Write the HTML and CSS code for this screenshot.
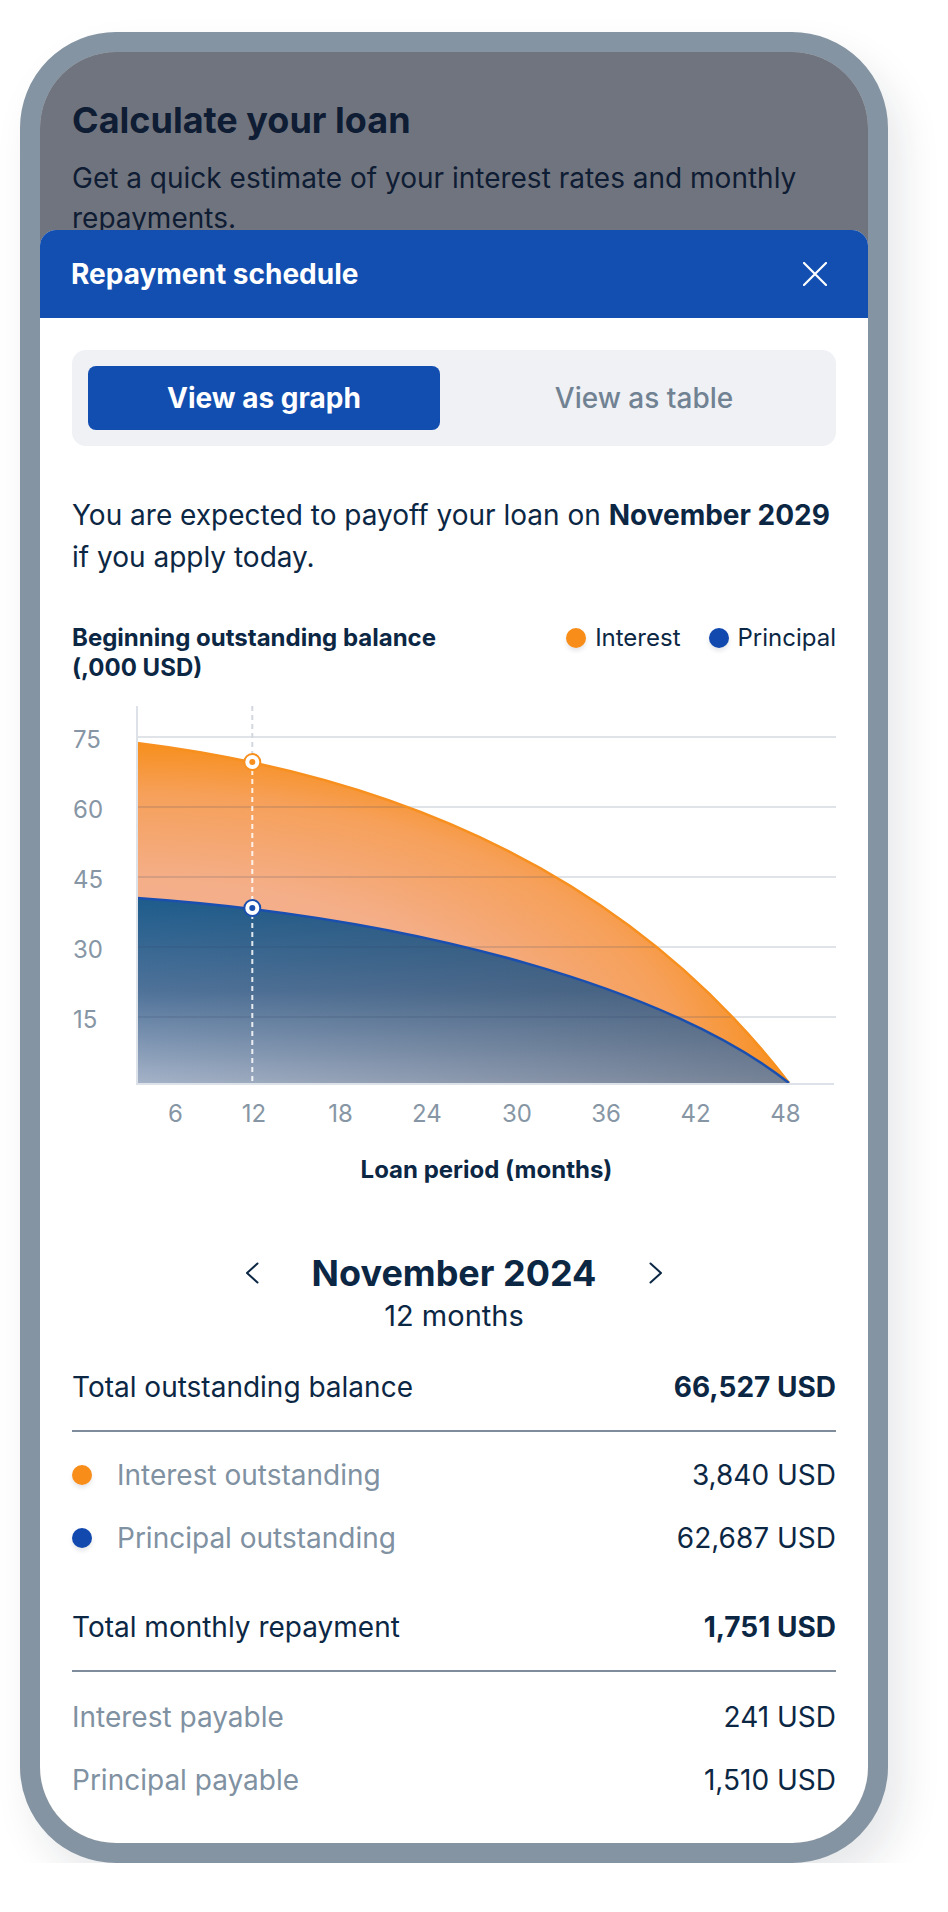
FILE: index.html
```html
<!DOCTYPE html>
<html lang="en">
<head>
<meta charset="utf-8">
<title>Calculate your loan – Repayment schedule</title>
<link rel="stylesheet" href="styles.css">
</head>
<body>
<div class="phone">
  <div class="screen">
    <section class="intro">
      <h1>Calculate your loan</h1>
      <p>Get a quick estimate of your interest rates and monthly repayments.</p>
    </section>

    <div class="scrim"></div>

    <div class="sheet" role="dialog" aria-label="Repayment schedule">
      <header class="sheet-head">
        <h2>Repayment schedule</h2>
        <button class="close" aria-label="Close">
          <svg viewBox="0 0 24 24" width="24" height="24"><path d="M1 1 L23 23 M23 1 L1 23" stroke="#fff" stroke-width="2.2" stroke-linecap="round" fill="none"/></svg>
        </button>
      </header>

      <div class="sheet-body">
        <div class="toggle">
          <button class="seg active">View as graph</button>
          <button class="seg">View as table</button>
        </div>

        <p class="payoff">You are expected to payoff your loan on <strong>November 2029</strong><br>if you apply today.</p>

        <div class="chart-head">
          <h3>Beginning outstanding balance<br>(,000 USD)</h3>
          <ul class="legend">
            <li><span class="dot interest"></span>Interest</li>
            <li><span class="dot principal"></span>Principal</li>
          </ul>
        </div>

        <svg class="chart" viewBox="0 0 764 440" width="764" height="440">
          <defs>
            <!-- interest fill: saturated along the curve, fading towards the lower left -->
            <radialGradient id="gInterest" gradientUnits="objectBoundingBox" cx="0" cy="1" r="1" fx="0" fy="1">
              <stop offset="0" stop-color="#f3b8a0"/>
              <stop offset="0.6" stop-color="#f4ae88"/>
              <stop offset="0.85" stop-color="#f6a05a"/>
              <stop offset="1" stop-color="#f78f1d"/>
            </radialGradient>
            <linearGradient id="gPrincipal" gradientUnits="userSpaceOnUse" x1="0" y1="198" x2="0" y2="384">
              <stop offset="0" stop-color="#1d5c8c"/>
              <stop offset="0.5" stop-color="#4f7299"/>
              <stop offset="1" stop-color="#a6b3c8"/>
            </linearGradient>
            <linearGradient id="gShade" gradientUnits="userSpaceOnUse" x1="65" y1="0" x2="717" y2="0">
              <stop offset="0" stop-color="#3a4658" stop-opacity="0"/>
              <stop offset="1" stop-color="#3a4658" stop-opacity="0.45"/>
            </linearGradient>
          </defs>

          <!-- stacked areas -->
          <path d="M65 43 C345 78 567 188 717 383 L717 384 L65 384 Z" fill="url(#gInterest)"/>
          <path d="M65 198 C350 218 600 290 717 383 L717 384 L65 384 Z" fill="url(#gPrincipal)"/>
          <path d="M65 198 C350 218 600 290 717 383 L717 384 L65 384 Z" fill="url(#gShade)"/>

          <!-- grid -->
          <g stroke="rgba(50,70,100,0.15)" stroke-width="2">
            <line x1="66" y1="37" x2="764" y2="37"/>
            <line x1="66" y1="107" x2="764" y2="107"/>
            <line x1="66" y1="177" x2="764" y2="177"/>
            <line x1="66" y1="247" x2="764" y2="247"/>
            <line x1="66" y1="317" x2="764" y2="317"/>
          </g>

          <!-- series lines -->
          <path d="M65 43 C345 78 567 188 717 383" fill="none" stroke="#f7901e" stroke-width="2.5"/>
          <path d="M65 198 C350 218 600 290 717 383" fill="none" stroke="#1a4fb0" stroke-width="2.5"/>

          <!-- axes -->
          <line x1="65" y1="6" x2="65" y2="385" stroke="#dde2e8" stroke-width="2"/>
          <line x1="64" y1="384" x2="762" y2="384" stroke="#dde2e8" stroke-width="2"/>

          <!-- selected month -->
          <line x1="180.3" y1="6" x2="180.3" y2="54" stroke="#d3d8df" stroke-width="2" stroke-dasharray="5 4"/>
          <line x1="180.3" y1="70" x2="180.3" y2="383" stroke="rgba(255,255,255,0.85)" stroke-width="2" stroke-dasharray="5 4"/>
          <circle cx="180.3" cy="62" r="8" fill="#fff" stroke="#f7901e" stroke-width="2"/>
          <circle cx="180.3" cy="62" r="3" fill="#f7901e"/>
          <circle cx="180.3" cy="208" r="8" fill="#fff" stroke="#1a4fb0" stroke-width="2"/>
          <circle cx="180.3" cy="208" r="3" fill="#1a4fb0"/>

          <!-- axis labels -->
          <g class="tick">
            <text x="1" y="48">75</text>
            <text x="1" y="118">60</text>
            <text x="1" y="188">45</text>
            <text x="1" y="258">30</text>
            <text x="1" y="328">15</text>
          </g>
          <g class="tick" text-anchor="middle">
            <text x="103.5" y="422">6</text>
            <text x="182" y="422">12</text>
            <text x="268.5" y="422">18</text>
            <text x="355" y="422">24</text>
            <text x="445" y="422">30</text>
            <text x="534" y="422">36</text>
            <text x="623.5" y="422">42</text>
            <text x="713.5" y="422">48</text>
          </g>
        </svg>

        <div class="axis-title">Loan period (months)</div>

        <div class="period">
          <div class="period-nav">
            <button class="chev" aria-label="Previous month">
              <svg viewBox="0 0 24 24" width="24" height="24"><path d="M16.5 2.5 L6 12 L16.5 21.5" fill="none" stroke="#0c2744" stroke-width="2" stroke-linecap="round" stroke-linejoin="round"/></svg>
            </button>
            <h4>November 2024</h4>
            <button class="chev" aria-label="Next month">
              <svg viewBox="0 0 24 24" width="24" height="24"><path d="M7.5 2.5 L18 12 L7.5 21.5" fill="none" stroke="#0c2744" stroke-width="2" stroke-linecap="round" stroke-linejoin="round"/></svg>
            </button>
          </div>
          <div class="period-sub">12 months</div>
        </div>

        <div class="summary">
          <div class="group">
            <div class="total"><span>Total outstanding balance</span><strong>66,527 USD</strong></div>
            <div class="items">
              <div class="item"><span class="label"><span class="dot interest"></span>Interest outstanding</span><span>3,840 USD</span></div>
              <div class="item"><span class="label"><span class="dot principal"></span>Principal outstanding</span><span>62,687 USD</span></div>
            </div>
          </div>
          <div class="group">
            <div class="total"><span>Total monthly repayment</span><strong>1,751 USD</strong></div>
            <div class="items">
              <div class="item"><span class="label">Interest payable</span><span>241 USD</span></div>
              <div class="item"><span class="label">Principal payable</span><span>1,510 USD</span></div>
            </div>
          </div>
        </div>
      </div>
    </div>
  </div>
</div>
</body>
</html>
```

FILE: styles.css
```css
* {
  box-sizing: border-box;
  margin: 0;
  padding: 0;
}

body {
  background: #fff;
  font-family: Inter, "Noto Sans", "Liberation Sans", sans-serif;
  color: #0c2744;
}

button {
  font-family: inherit;
  background: none;
  border: 0;
  cursor: pointer;
}

/* device frame */
.phone {
  width: 868px;
  height: 1831px;
  margin: 32px 0 0 20px;
  border: 20px solid #8494a2;
  border-radius: 96px;
  background: #8494a2;
  box-shadow: 14px 22px 40px rgba(20, 30, 45, 0.10);
}

.screen {
  position: relative;
  height: 100%;
  border-radius: 76px;
  overflow: hidden;
  background: #fff;
}

/* page behind the sheet */
.intro {
  padding: 46px 32px 0;
}

.intro h1 {
  font-size: 36px;
  line-height: 44px;
  font-weight: 700;
}

.intro p {
  margin-top: 16px;
  font-size: 28px;
  line-height: 40px;
}

.scrim {
  position: absolute;
  inset: 0;
  background: rgba(16, 24, 40, 0.6);
}

/* bottom sheet */
.sheet {
  position: absolute;
  top: 178px;
  left: 0;
  right: 0;
  bottom: 0;
  background: #fff;
  border-radius: 16px 16px 0 0;
  overflow: hidden;
}

.sheet-head {
  height: 88px;
  background: #124fb0;
  color: #fff;
  display: flex;
  align-items: center;
  justify-content: space-between;
  padding: 0 41px 0 31px;
}

.sheet-head h2 {
  font-size: 28px;
  font-weight: 700;
}

.close {
  width: 24px;
  height: 24px;
}

.close svg {
  display: block;
}

.sheet-body {
  padding: 32px 32px 0;
}

/* graph / table switch */
.toggle {
  display: grid;
  grid-template-columns: 1fr 1fr;
  column-gap: 28px;
  padding: 16px;
  background: #eff1f5;
  border-radius: 14px;
}

.seg {
  height: 64px;
  border-radius: 8px;
  font-size: 28px;
  font-weight: 500;
  color: #718293;
}

.seg.active {
  background: #124eb0;
  color: #fff;
  font-weight: 700;
}

.payoff {
  margin-top: 48px;
  font-size: 28px;
  line-height: 42px;
  white-space: nowrap;
}

.payoff strong {
  font-weight: 700;
}

/* chart */
.chart-head {
  margin-top: 45px;
  display: flex;
  justify-content: space-between;
  align-items: flex-start;
}

.chart-head h3 {
  font-size: 24px;
  line-height: 30px;
  font-weight: 700;
}

.legend {
  list-style: none;
  display: flex;
  gap: 28px;
  font-size: 24px;
  line-height: 30px;
}

.legend li {
  display: flex;
  align-items: center;
  gap: 9px;
}

.dot {
  display: inline-block;
  width: 20px;
  height: 20px;
  border-radius: 50%;
  box-shadow: 0 3px 4px rgba(40, 50, 70, 0.12);
  flex: none;
}

.dot.interest {
  background: #f98d1a;
}

.dot.principal {
  background: #1249ae;
}

.chart {
  display: block;
  margin-top: 17px;
}

.tick text {
  font-family: Inter, "Noto Sans", sans-serif;
  font-size: 24px;
  fill: #8796a5;
}

.axis-title {
  margin-top: 15px;
  padding-left: 65px;
  text-align: center;
  font-size: 24px;
  line-height: 30px;
  font-weight: 700;
}

/* month picker */
.period {
  margin-top: 66px;
  display: flex;
  flex-direction: column;
  align-items: center;
}

.period-nav {
  display: flex;
  align-items: center;
  gap: 47px;
}

.chev {
  width: 24px;
  height: 24px;
}

.chev svg {
  display: block;
}

.period-nav h4 {
  font-size: 36px;
  line-height: 44px;
  font-weight: 700;
}

.period-sub {
  font-size: 29px;
  line-height: 42px;
}

/* breakdown */
.summary {
  margin-top: 29px;
  display: flex;
  flex-direction: column;
  gap: 47px;
  font-size: 28px;
  line-height: 42px;
}

.total {
  display: flex;
  justify-content: space-between;
  padding-bottom: 22px;
  border-bottom: 2px solid #7e8c9b;
  margin-bottom: 22px;
}

.group + .group .total {
  margin-bottom: 24px;
}

.total strong {
  font-weight: 700;
}

.items {
  display: flex;
  flex-direction: column;
  gap: 21px;
}

.item {
  display: flex;
  justify-content: space-between;
}

.label {
  display: flex;
  align-items: center;
  gap: 25px;
  color: #8091a2;
}
```
